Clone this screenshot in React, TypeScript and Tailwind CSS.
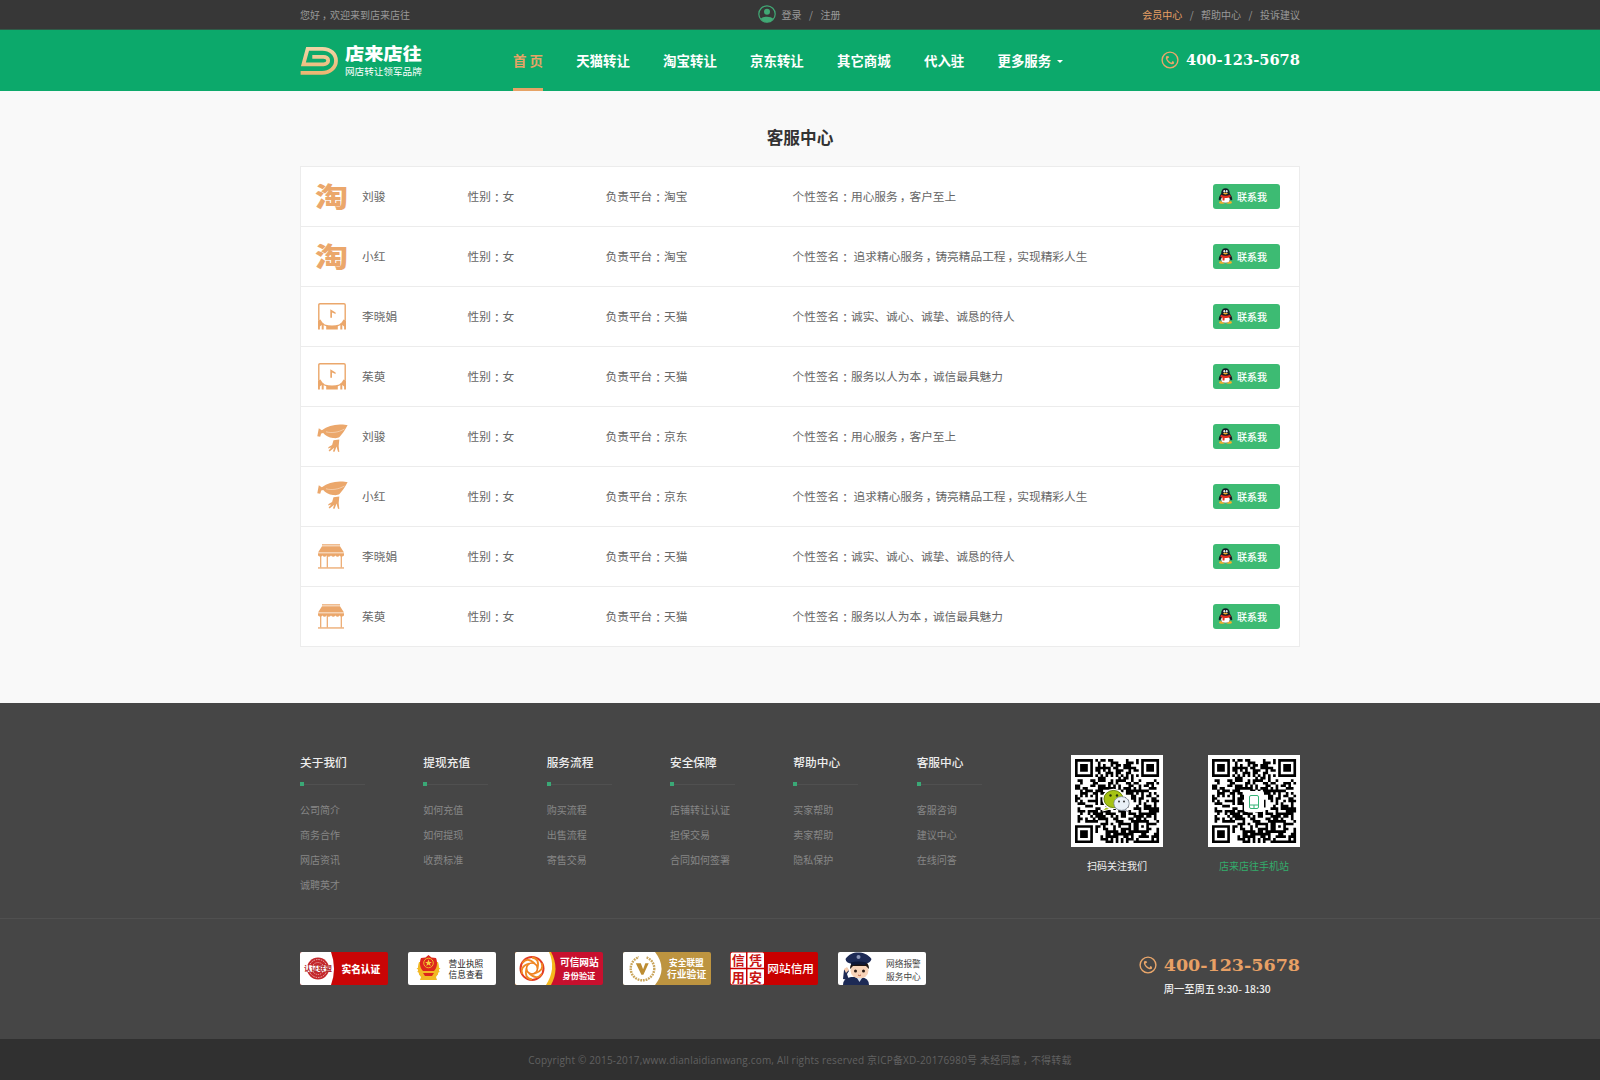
import React from "react";

const ORANGE = "#eba76b";

/* Full-width colons and commas sit in the middle of their cell. */
function T({ children }: { children: string }) {
  return (
    <>
      {children.split(/([：，])/).map((s, i) =>
        s === "：" ? (
          <span key={i} className="relative top-px font-['Noto_Sans_CJK_TC',sans-serif]">：</span>
        ) : s === "，" ? (
          <span key={i} className="inline-block translate-x-[2px]">，</span>
        ) : (
          s
        )
      )}
    </>
  );
}

function PhoneIcon({ className }: { className?: string }) {
  return (
    <svg viewBox="0 0 18 18" className={className} fill="none" stroke={ORANGE}>
      <circle cx="9" cy="9" r="7.9" strokeWidth="1.4" />
      <path d="M6.3 5.2C5 6.4 5.6 8.6 7.3 10.5s4 2.8 5.3 1.5" strokeWidth="1.3" />
      <path d="M6.1 5.3l1.2 1.7M10.9 11l1.8 1" strokeWidth="2.2" />
    </svg>
  );
}

function LogoMark() {
  return (
    <svg viewBox="0 0 38 30" className="h-[30px] w-[38px]" fill="none">
      <defs>
        <linearGradient id="lg" x1="0" y1="0" x2="0" y2="1">
          <stop offset="0" stopColor="#efd3a4" />
          <stop offset="1" stopColor="#ecb673" />
        </linearGradient>
      </defs>
      <path
        d="M0.6 26.8H22C30 26.8 36 21.6 36 14.8S30.5 2.8 22.5 2.8H7.6L3.4 18.3H23.5C26 18.3 28.2 17 28.2 14.5S26 10.8 23.5 10.8H12.3"
        stroke="url(#lg)"
        strokeWidth="3.8"
      />
    </svg>
  );
}

function TmallIcon() {
  return (
    <svg viewBox="0 0 28 27" className="ml-[3.500px] h-[27px] w-[28px]" fill={ORANGE}>
      <path d="M.8 17.500V2Q.8.800 2 .8H26Q27.200.800 27.200 2V17.500" fill="none" stroke={ORANGE} strokeWidth="1.400" />
      <path d="M12.300 6.300v8.400h1.700V9.600l3.600 1.300V9.400z" />
      <path d="M0 26.500V17.500l2.400-.9 3.300 4.900v5H3.700V22l-1.800 1.500v3zM28 26.500V17.500l-2.400-.9-3.300 4.900v5h2V22l1.800 1.500v3z" />
      <path d="M4.500 19.500l2.300 1.900c4.500 1.500 9.900 1.500 14.400 0l2.300-1.900v2.300l-3.700 1.500v3.200H8.200v-3.200l-3.700-1.500z" />
    </svg>
  );
}

function JdIcon({ lifted }: { lifted: boolean }) {
  return (
    <svg viewBox="0 0 31 28" className={lifted ? "-mt-[3px] ml-[3px] h-[28px] w-[31px]" : "mt-[2px] ml-[3px] h-[28px] w-[31px]"} fill={ORANGE}>
      <path d="M0.300 12.300L1.800 4.300l3 1.900C10 2.400 16 .500 23 .4c3-.1 6 .3 7.600.7l-1.300 2.300c-1.800 3.400-4.300 6.600-6.800 9.700-1.200 1-3.500 1.300-6.500 1-4-.5-8-2.700-9.800-5.100l-2 .5-1 3.300z" />
      <path d="M16.500 16.200l5.800-.8-.6 6.600.6 5.900-1.300-.2-1.500-5.200-1.900 5.300-1.700-.2 1.300-3.800-4.600 3.800-1-1 2.600-3-3.200.8.600-1.500 3.500-1.900z" />
      <path d="M9 7.800c6 1.500 12 .7 18.500-2.800" stroke="#fff" strokeWidth=".4" fill="none" />
    </svg>
  );
}

function ShopIcon() {
  return (
    <svg viewBox="0 0 26 25" className="ml-[3.500px] h-[25px] w-[26px]" fill={ORANGE}>
      <path d="M4 0.300h18v1.300H4zM4 2.200h18l4 6.300H0zM0 9.300h26v2c-1.400 2-3.200 1.700-4.400.1-1.200 1.700-3 1.700-4.200 0-1.200 1.700-3.200 1.700-4.400 0-1.200 1.700-3.200 1.700-4.400 0-1.200 1.700-3 1.700-4.200 0C3.200 13 1.400 13.300 0 11.300z" />
      <path d="M2.700 12v11.500M9.300 12v11.500M23.300 12v11.500" stroke={ORANGE} strokeWidth="1.200" />
      <path d="M0 23.300h26v1.300H0z" />
    </svg>
  );
}

function Penguin() {
  return (
    <svg viewBox="0 0 15 16" className="-mt-px h-[16px] w-[15px]">
      <ellipse cx="4" cy="14.400" rx="3" ry="1.300" fill="#f3b02a" />
      <ellipse cx="11" cy="14.400" rx="3" ry="1.300" fill="#f3b02a" />
      <path d="M3.200 5.500C3.200 2 5 .2 7.500.2s4.300 1.800 4.300 5.300c1.400 1.700 2.700 4.300 2.400 6.300-.2.900-1 .6-1.600-.5-.5 2.200-2.300 3.500-5.100 3.500s-4.600-1.300-5.100-3.500C1.800 12.400 1 12.700.8 11.800.5 9.800 1.800 7.200 3.200 5.500z" fill="#141b26" />
      <ellipse cx="7.500" cy="11.500" rx="4.300" ry="3.300" fill="#fff" />
      <ellipse cx="6.300" cy="3.300" rx=".9" ry="1.200" fill="#e8edf0" />
      <ellipse cx="8.700" cy="3.300" rx=".9" ry="1.200" fill="#e8edf0" />
      <ellipse cx="7.500" cy="5.600" rx="2.400" ry=".8" fill="#f3b02a" />
      <path d="M3 6.800c3 1.400 6 1.400 9 0l.8 1.900c-2 1.200-4.300 1.500-6.200 1.400l-.1 2.300H4.600L4.500 9.700 2.300 8.500z" fill="#e02c1c" />
    </svg>
  );
}

type Member = { icon: "tao" | "tmall" | "jd" | "shop"; name: string; platform: string; sign: string };
const members: Member[] = [
  { icon: "tao", name: "刘骏", platform: "淘宝", sign: "用心服务，客户至上" },
  { icon: "tao", name: "小红", platform: "淘宝", sign: " 追求精心服务，铸亮精品工程，实现精彩人生" },
  { icon: "tmall", name: "李晓娟", platform: "天猫", sign: "诚实、诚心、诚挚、诚恳的待人" },
  { icon: "tmall", name: "茱萸", platform: "天猫", sign: "服务以人为本，诚信最具魅力" },
  { icon: "jd", name: "刘骏", platform: "京东", sign: "用心服务，客户至上" },
  { icon: "jd", name: "小红", platform: "京东", sign: " 追求精心服务，铸亮精品工程，实现精彩人生" },
  { icon: "shop", name: "李晓娟", platform: "天猫", sign: "诚实、诚心、诚挚、诚恳的待人" },
  { icon: "shop", name: "茱萸", platform: "天猫", sign: "服务以人为本，诚信最具魅力" },
];

const columns = [
  { title: "关于我们", links: ["公司简介", "商务合作", "网店资讯", "诚聘英才"] },
  { title: "提现充值", links: ["如何充值", "如何提现", "收费标准"] },
  { title: "服务流程", links: ["购买流程", "出售流程", "寄售交易"] },
  { title: "安全保障", links: ["店铺转让认证", "担保交易", "合同如何签署"] },
  { title: "帮助中心", links: ["买家帮助", "卖家帮助", "隐私保护"] },
  { title: "客服中心", links: ["客服咨询", "建议中心", "在线问答"] },
];

/* 33×33 code: finder, alignment and timing patterns with hashed data modules. */
function qrPath() {
  const n = 33;
  let d = "";
  let seed = 20176980;
  const ring = (x: number, y: number, cx: number, cy: number) => Math.max(Math.abs(x - cx), Math.abs(y - cy));
  for (let y = 0; y < n; y++) {
    for (let x = 0; x < n; x++) {
      seed = (seed * 1103515245 + 12345) % 2147483648;
      let on = (seed >> 12) % 100 < 53;
      if (x === 6 || y === 6) on = (x + y) % 2 === 0;
      for (const [cx, cy] of [[3, 3], [29, 3], [3, 29]]) {
        const r = ring(x, y, cx, cy);
        if (r <= 4) on = r === 3 || r <= 1;
      }
      const a = ring(x, y, 26, 26);
      if (a <= 2) on = a !== 1;
      if (on) d += `M${x} ${y}h1.04v1.04h-1.04z`;
    }
  }
  return d;
}
const QR = qrPath();

function QrCode({ kind }: { kind: "wechat" | "mobile" }) {
  return (
    <svg viewBox="0 0 92 92" className="h-[92px] w-[92px]">
      <path d="M0 0h92v92H0z" fill="#fff" />
      <path d={QR} fill="#000" transform="translate(4 4) scale(2.545)" />
      {kind === "wechat" ? (
        <g>
          <path d="M35 52l-3.500 4 8-2z" fill="#a3bf12" stroke="#fff" />
          <ellipse cx="42.500" cy="44" rx="10.500" ry="9.500" fill="#a6c313" stroke="#fff" strokeWidth="1.500" />
          <ellipse cx="42.500" cy="44" rx="9.500" ry="8.600" fill="#a6c313" stroke="#55700c" strokeWidth=".7" />
          <path d="M53 53l4 3.500-8-2z" fill="#e6eef6" stroke="#667" strokeWidth=".5" />
          <ellipse cx="50.500" cy="48.500" rx="7.700" ry="6.900" fill="#e9f0f7" stroke="#6d7986" strokeWidth=".7" />
          <circle cx="39.500" cy="40.500" r="1.200" fill="#26300a" />
          <circle cx="46" cy="40.500" r="1.200" fill="#26300a" />
          <circle cx="48" cy="46.500" r="1" fill="#333" />
          <circle cx="53" cy="46.500" r="1" fill="#333" />
        </g>
      ) : (
        <g>
          <rect x="36" y="36" width="20" height="21" rx="2" fill="#fff" />
          <rect x="41.500" y="40.500" width="9" height="13" rx="1.500" fill="none" stroke="#35b477" />
          <path d="M41.500 50h9M46 50v3.500" stroke="#35b477" />
        </g>
      )}
    </svg>
  );
}

function Badge({ clip, children }: { clip?: string; children: React.ReactNode }) {
  return (
    <svg viewBox="0 0 88 33" className="h-[33px] w-[88px] overflow-visible font-['Noto_Sans_CJK_SC',sans-serif]">
      {clip ? (
        <>
          <defs>
            <clipPath id={clip}>
              <rect width="88" height="33" rx="2" />
            </clipPath>
          </defs>
          <g clipPath={`url(#${clip})`}>{children}</g>
        </>
      ) : (
        children
      )}
    </svg>
  );
}

function Badges() {
  return (
    <div className="flex gap-[19.500px]">
      <Badge clip="b1">
        <path d="M0 0h88v33H0z" fill="#c90506" />
        <path d="M0 0h31q6 16.500 0 33H0z" fill="#fff" />
        <circle cx="18" cy="16.500" r="11" fill="#c4282c" />
        <circle cx="18" cy="16.500" r="9" fill="none" stroke="#f3d0d0" strokeWidth=".8" strokeDasharray="1.500 1" />
        <circle cx="18" cy="16.500" r="6" fill="none" stroke="#f3d0d0" strokeWidth=".8" strokeDasharray="1 1" />
        <path d="M3 13.300h30v6.700H3z" fill="#fff" />
        <text x="4" y="19.200" fontSize="7" fontWeight="700" fill="#b3262a">认证联盟</text>
        <text x="41.500" y="20.800" fontSize="9.700" fontWeight="900" fill="#fff">实名认证</text>
      </Badge>
      <Badge clip="b2">
        <path d="M0 0h88v33H0z" fill="#fff" />
        <path d="M11 10c-2 6-1 12 2 15l-1 3h17l-1-3c3-3 4-9 2-15z" fill="#f2b824" />
        <path d="M12 15l-2 1.500 2 1-1.500 2 2.500.5-1 2 3 .3M29 15l2 1.500-2 1 1.500 2-2.500.5 1 2-3 .3" stroke="#f2b824" strokeWidth="1.500" fill="none" />
        <path d="M20.500 3l3 2.500 4.500.5c2 5 1 10-2 13h-11c-3-3-4-8-2-13l4.500-.5z" fill="#dc251c" />
        <circle cx="20.500" cy="11" r="4.800" fill="none" stroke="#f2b824" />
        <path d="M20.500 7.500l1 2.400h2.400l-2 1.500.8 2.500-2.200-1.500-2.200 1.500.8-2.500-2-1.500h2.400z" fill="#f7cf3f" />
        <path d="M15 21h11l-2 3h-7z" fill="#dc251c" />
        <text x="40.500" y="15" fontSize="8.700" fill="#222">营业执照</text>
        <text x="40.500" y="26" fontSize="8.700" fill="#222">信息查看</text>
      </Badge>
      <Badge clip="b3">
        <path d="M0 0h88v33H0z" fill="#c8102e" />
        <path d="M0 0h36q9 16.500 0 33H0z" fill="#f5b81c" />
        <path d="M0 0h34q7.500 16.500-3 33H0z" fill="#fff" />
        <g fill="none" strokeWidth="2">
          <circle cx="17" cy="16.500" r="11.500" stroke="#e33d24" />
          <circle cx="17" cy="16.500" r="5.500" stroke="#ef7b1d" strokeWidth="1.600" />
          {[0, 60, 120, 180, 240, 300].map((a) => (
            <path key={a} d="M17 5.500q8 1 5.500 11" stroke="#f08a24" strokeWidth="1.800" transform={`rotate(${a} 17 16.500)`} />
          ))}
        </g>
        <text x="45" y="14" fontSize="9.700" fontWeight="700" fill="#fff">可信网站</text>
        <text x="47.500" y="26.500" fontSize="8.200" fontWeight="700" fill="#fff">身份验证</text>
      </Badge>
      <Badge clip="b4">
        <path d="M0 0h88v33H0z" fill="#bd9440" />
        <path d="M0 0h32q13 16.500 0 33H0z" fill="#fff" />
        <circle cx="19.500" cy="16.500" r="11.800" fill="none" stroke="#c9a45a" strokeWidth="2.400" strokeDasharray="1.800 .9" />
        <path d="M16 3h7v4h-7z" fill="#fff" />
        <path d="M12.800 11.300h5l2.300 6 2.200-6h3.400L20.400 22.800h-2z" fill="#bd8d33" />
        <text x="46" y="14" fontSize="8.700" fontWeight="700" fill="#fff">安全联盟</text>
        <text x="44" y="25.500" fontSize="9.800" fontWeight="700" fill="#fff">行业验证</text>
      </Badge>
      <Badge>
        <rect width="88" height="33" rx="2" fill="#c90000" />
        <path d="M.7 2q0-1.500 1.500-1.500H16v15.200H.7zM17.500.5h15q1.500 0 1.500 1.500v13.700H17.500zM.7 17.200H16v15.200H2.200Q.7 32.400.7 31zM17.500 17.200H34V31q0 1.400-1.500 1.400h-15z" fill="#fff" />
        <g fontSize="13" fontWeight="700" fill="#c81414">
          <text x="1.800" y="12.800">信</text>
          <text x="19" y="12.800">凭</text>
          <text x="1.800" y="29.600">用</text>
          <text x="19" y="29.600">安</text>
        </g>
        <text x="37.300" y="21" fontSize="11.700" fontWeight="500" fill="#fff">网站信用</text>
      </Badge>
      <Badge clip="b6">
        <path d="M0 0h88v33H0z" fill="#fff" />
        <path d="M5 33q0-7 8-8h10q8 1 8 8z" fill="#1d2a55" />
        <path d="M5 27l1-9 3-2 2 3-2 3 2 6z" fill="#1d2a55" />
        <path d="M6 17l3-2 2 3-3 3z" fill="#f6cdb0" />
        <ellipse cx="21.500" cy="18.500" rx="9" ry="8" fill="#f8d3b8" />
        <path d="M12 17c0-3 1-5 2-6h15c1 1 2 3 2 6l-3-3H15z" fill="#20140f" />
        <path d="M7.500 7C11 2 15 .5 20 .5S30 2 33.500 7c-1 3-3 4-5 4.500q-8-2-16 0C10 11 8 10 7.500 7z" fill="#1d2a55" />
        <path d="M12.500 10.500q8-2 16 0l-1.500 3q-6.500-2-13 0z" fill="#0f1838" />
        <circle cx="20.500" cy="5" r="2" fill="#8b96b8" />
        <circle cx="17.500" cy="19" r="1.500" fill="#2a1a14" />
        <circle cx="25.500" cy="19" r="1.500" fill="#2a1a14" />
        <path d="M20 23q1.500 1.200 3 0" stroke="#b0442f" fill="none" strokeWidth=".8" />
        <path d="M19 26h5l-2.500 4z" fill="#dfe6f3" />
        <text x="48" y="15" fontSize="8.700" fill="#444">网络报警</text>
        <text x="48" y="28" fontSize="8.700" fill="#444">服务中心</text>
      </Badge>
    </div>
  );
}

const nav = ["天猫转让", "淘宝转让", "京东转让", "其它商城", "代入驻"];

export default function App() {
  return (
    <div className="flex h-[1080px] w-[1600px] flex-col overflow-hidden bg-[#f9f9f9] font-['Noto_Sans_CJK_SC',sans-serif] text-[#666]">
      <div className="h-[30px] shrink-0 border-b border-[#2f5b48] bg-[#373737] text-[10px] text-[#999]">
        <div className="mx-auto grid h-[28px] w-[1000px] grid-cols-3 items-center">
          <div><T>您好，欢迎来到店来店往</T></div>
          <div className="flex items-center justify-center pr-[2px]">
            <svg viewBox="0 0 18 18" className="-mt-px mr-[6px] h-[18px] w-[18px]">
              <circle cx="9" cy="9" r="8.200" fill="none" stroke="#41a975" strokeWidth="1.200" />
              <circle cx="9" cy="6.800" r="3" fill="#41a975" />
              <path d="M2.800 13.800c2-2.800 10.400-2.800 12.400 0-3 4.500-9.400 4.500-12.400 0z" fill="#41a975" />
            </svg>
            <span>登录</span><span className="mx-[7.500px]">/</span><span>注册</span>
          </div>
          <div className="flex justify-end">
            <span className="text-[#e8a065]">会员中心</span><span className="mx-[7.500px]">/</span><span>帮助中心</span><span className="mx-[7.500px]">/</span><span>投诉建议</span>
          </div>
        </div>
      </div>

      <header className="h-[61px] shrink-0 bg-[#0ca96b]">
        <div className="mx-auto flex h-[61px] w-[1000px]">
          <div className="flex w-[213px] pt-[16px]">
            <LogoMark />
            <div className="ml-[7px] text-white">
              <div className="origin-top scale-y-90 text-[19.200px] leading-[17px] font-black">店来店往</div>
              <div className="mt-[3px] text-[9.600px] leading-[10px]">网店转让领军品牌</div>
            </div>
          </div>
          <nav className="flex gap-[33.200px] text-[13.450px] leading-[61px] font-bold text-white">
            <span className="h-[61px] border-b-[3px] border-[#e6a366] whitespace-pre text-[#e6a366]">首 页</span>
            {nav.map((n) => (
              <span key={n}>{n}</span>
            ))}
            <span className="flex">
              更多服务
              <span className="mt-[30px] ml-[6px] h-0 border-x-[3px] border-t-[3px] border-x-transparent border-t-white" />
            </span>
          </nav>
          <div className="ml-auto flex h-[59px] items-center font-['DejaVu_Serif',serif] text-[14.650px] font-bold text-white">
            <PhoneIcon className="mr-[7px] h-[18px] w-[18px]" />
            400-123-5678
          </div>
        </div>
      </header>

      <main className="mx-auto w-[1000px] flex-1">
        <h1 className="mt-[34px] text-center text-[16.670px] leading-[24px] font-bold text-[#333]">客服中心</h1>
        <div className="mt-[17px] border border-b-0 border-[#ececec] bg-white text-[11.700px]">
          {members.map((m, i) => (
            <div key={i} className="flex h-[60px] items-center border-b border-[#ececec]">
              <div className="ml-[13px] flex w-[48px] items-center">
                {m.icon === "tao" && (
                  <span className="-mt-[2px] ml-px scale-y-[0.820] text-[33px] leading-[40px] font-black text-[#eba76b]">淘</span>
                )}
                {m.icon === "tmall" && <TmallIcon />}
                {m.icon === "jd" && <JdIcon lifted={i === 5} />}
                {m.icon === "shop" && <ShopIcon />}
              </div>
              <div className="flex flex-1 pb-[2px]">
                <div className="w-[105.500px]">{m.name}</div>
                <div className="w-[138px]"><T>性别：女</T></div>
                <div className="w-[187px]"><T>{"负责平台：" + m.platform}</T></div>
                <div className="flex-1 whitespace-pre"><T>{"个性签名：" + m.sign}</T></div>
              </div>
              <button className="mr-[19px] flex h-[25px] w-[67px] items-center rounded-[3px] bg-[#3dbb73] pl-[5px] text-[10px] font-medium text-white">
                <Penguin />
                <span className="ml-[4px]">联系我</span>
              </button>
            </div>
          ))}
        </div>
      </main>

      <footer className="h-[377px] shrink-0 bg-[#464646]">
        <div className="h-[216px] border-b border-[#505050]">
          <div className="mx-auto flex w-[1000px] pt-[51px]">
            {columns.map((c) => (
              <div key={c.title} className="-mt-px w-[123.330px]">
                <div className="text-[11.700px] leading-[18px] font-medium text-[#eee]">{c.title}</div>
                <div className="mt-[11px] flex h-[4px] w-[65px] items-center">
                  <span className="h-[4px] w-[4px] bg-[#3aa876]" />
                  <span className="h-px flex-1 bg-[#505050]" />
                </div>
                <ul className="mt-[11px] text-[10px] leading-[25px] text-[#868686]">
                  {c.links.map((l) => (
                    <li key={l}>{l}</li>
                  ))}
                </ul>
              </div>
            ))}
            <div className="ml-auto flex gap-[45px] pt-px text-center text-[10px] leading-[16px]">
              <div>
                <QrCode kind="wechat" />
                <div className="mt-[11px] text-[#eee]">扫码关注我们</div>
              </div>
              <div>
                <QrCode kind="mobile" />
                <div className="mt-[11px] text-[#33ad6c]">店来店往手机站</div>
              </div>
            </div>
          </div>
        </div>
        <div className="mx-auto flex h-[120px] w-[1000px] justify-between pt-[33px]">
          <Badges />
          <div>
            <div className="flex items-center font-['DejaVu_Serif',serif] text-[17.500px] leading-[26px] font-bold text-[#e8a065]">
              <PhoneIcon className="mr-[7px] h-[18px] w-[18px]" />
              400-123-5678
            </div>
            <div className="mt-[3px] pl-[25px] text-[10.300px] leading-[16px] font-medium text-[#eee]">周一至周五 9:30- 18:30</div>
          </div>
        </div>
        <div className="h-[41px] bg-[#303030] text-center font-['Open_Sans','Noto_Sans_CJK_SC',sans-serif] text-[10px] leading-[43px] tracking-[0.180px] text-[#616161]">
          <T>Copyright © 2015-2017,www.dianlaidianwang.com, All rights reserved 京ICP备XD-20176980号 未经同意，不得转载</T>
        </div>
      </footer>
    </div>
  );
}
